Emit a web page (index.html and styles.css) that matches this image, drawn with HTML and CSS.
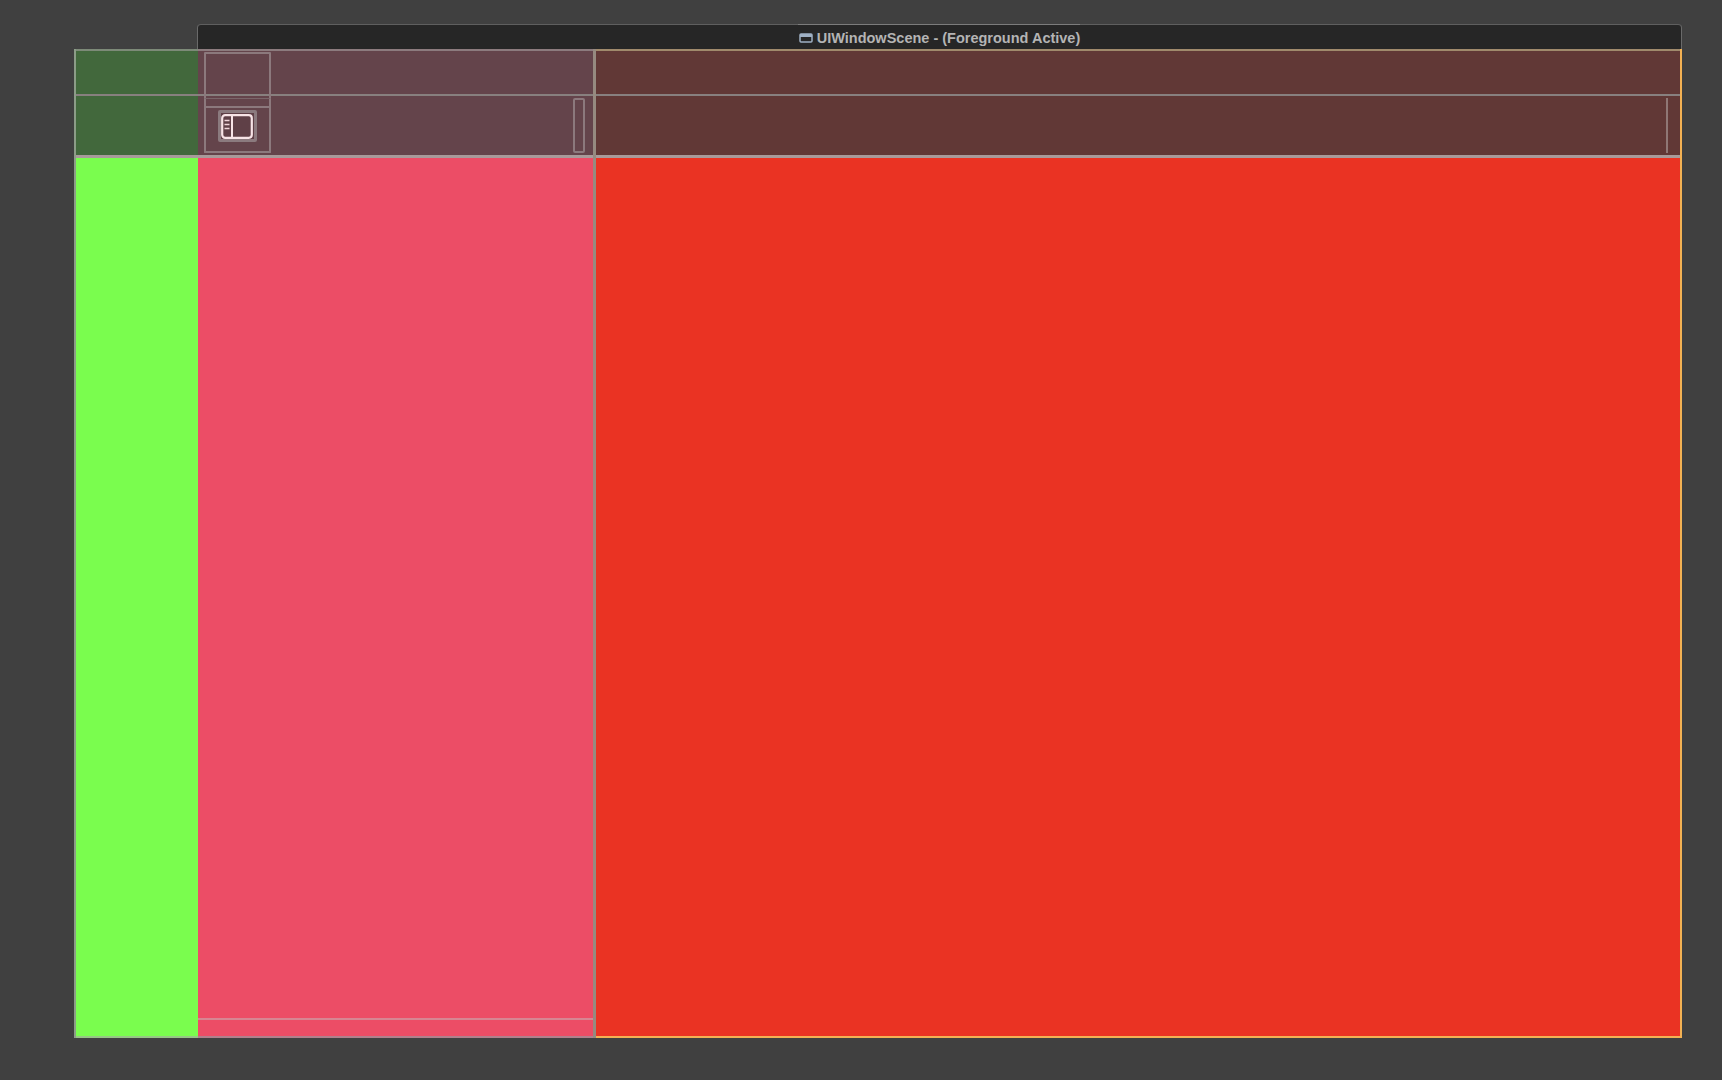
FILE: index.html
```html
<!DOCTYPE html>
<html lang="en">
<head>
    <meta charset="UTF-8">
    <title>UIWindowScene</title>
    <link rel="stylesheet" href="styles.css">
</head>
<body>
    <div class="scene-title">
        <svg class="scene-icon" width="14" height="10" viewBox="0 0 14 10">
            <rect x="1" y="1" width="12" height="8" rx="1" fill="none" stroke="#9fb0c4" stroke-width="1.5"/>
            <rect x="1" y="1" width="12" height="3" fill="#9fb0c4"/>
        </svg>
        <span>UIWindowScene - (Foreground Active)</span>
    </div>

    <div class="frame">
        <!-- Left column -->
        <div class="col col-green">
            <div class="bar">
                <div class="bar-top"></div>
                <div class="bar-bottom"></div>
            </div>
            <div class="col-body"></div>
        </div>

        <!-- Sidebar -->
        <div class="col col-pink">
            <div class="bar">
                <div class="bar-top"></div>
                <div class="bar-bottom"></div>
                <div class="nav-box"></div>
                <div class="nav-box-low"></div>
                <div class="toggle-box">
                    <svg width="33" height="25" viewBox="0 0 33 25">
                        <rect x="1.2" y="1.2" width="29.6" height="22.6" rx="3" fill="none" stroke="#f7e3e6" stroke-width="2.2"/>
                        <path d="M11 1v23" stroke="#f7e3e6" stroke-width="2"/>
                        <path d="M3.5 6.5h5M3.5 10.5h5M3.5 14.5h5" stroke="#f0d5da" stroke-width="1.7"/>
                    </svg>
                </div>
                <div class="side-handle"></div>
            </div>
            <div class="col-body">
                <div class="side-foot"></div>
            </div>
        </div>

        <!-- Content -->
        <div class="col col-red">
            <div class="bar">
                <div class="bar-top"></div>
                <div class="bar-bottom"></div>
                <div class="content-handle"></div>
            </div>
            <div class="col-body"></div>
        </div>
    </div>
</body>
</html>
```

FILE: styles.css
```css
/* Page */
body {
    margin: 0;
    height: 1080px;
    box-sizing: border-box;
    padding: 24px 40px 0 74px;
    background: #404040;
    font-family: "Liberation Sans", Arial, sans-serif;
    overflow: hidden;
}

/* Scene title */
.scene-title {
    position: relative;
    height: 25px;
    box-sizing: border-box;
    margin-left: 123px;
    display: flex;
    align-items: center;
    justify-content: center;
    gap: 4px;
    padding-top: 2px;
    background: #262626;
    border-top: 1px solid #5f5f5f;
    border-left: 1px solid #6a6a6a;
    border-right: 1px solid #6a6a6a;
    border-radius: 4px 4px 0 0;
    color: #b4b4b4;
    font-size: 14.5px;
    font-weight: bold;
}

/* Brighter stretch of the top edge above the label */
.scene-title::before {
    content: "";
    position: absolute;
    left: 600px;
    top: -1px;
    width: 282px;
    height: 1px;
    background: #7c7c7c;
}

/* Frame */
.frame {
    display: flex;
    height: 989px;
}

.col {
    display: flex;
    flex-direction: column;
}

.col-green {
    width: 124px;
    border-left: 2px solid #8c9c88;
    box-sizing: border-box;
}

.col-pink {
    width: 398px;
    box-sizing: border-box;
    border-right: 3px solid #968a80;
}

.col-red {
    flex: 1;
    border-right: 2px solid #f3b153;
}

/* Header bar */
.bar {
    position: relative;
    flex: none;
    box-sizing: border-box;
    height: 109px;
    border-bottom: 3px solid #a89a9a;
}

.bar-top {
    height: 43px;
    border-top: 2px solid #7d8a78;
    border-bottom: 2px solid #88807f;
}

.bar-bottom {
    height: 59px;
}

.col-green .bar {
    background: #42683c;
}

.col-pink .bar {
    background: #64444b;
}

.col-pink .bar-top {
    border-top-color: #8c7b7e;
}

.col-red .bar {
    background: #613836;
}

.col-red .bar-top {
    border-top-color: #a08a6c;
}

/* Column bodies */
.col-body {
    flex: 1;
    display: flex;
    flex-direction: column;
    justify-content: flex-end;
}

.col-green .col-body {
    background: #7afd4e;
    border-bottom: 2px solid #97c586;
}

.col-pink .col-body {
    background: #ec4d66;
    border-bottom: 2px solid #b0808c;
}

.col-red .col-body {
    background: #ea3323;
    border-bottom: 2px solid #f3b153;
}

.side-foot {
    height: 16px;
    border-top: 2px solid #d78592;
}

/* Overlaid view outlines */
.nav-box {
    position: absolute;
    left: 6px;
    top: 3px;
    width: 67px;
    height: 56px;
    box-sizing: border-box;
    border: 2px solid #8c797d;
    border-radius: 1px;
}

.nav-box-low {
    position: absolute;
    left: 6px;
    top: 49px;
    width: 67px;
    height: 55px;
    box-sizing: border-box;
    border: 2px solid #8c797d;
    border-top: 1px solid #7a666a;
    border-radius: 1px;
}

.toggle-box {
    position: absolute;
    left: 20px;
    top: 61px;
    width: 39px;
    height: 32px;
    box-sizing: border-box;
    border: 3px solid #8b7a7e;
    border-radius: 2px;
    background: #5f4047;
    display: flex;
    align-items: center;
    justify-content: center;
}

.side-handle {
    position: absolute;
    left: 375px;
    top: 49px;
    width: 12px;
    height: 55px;
    box-sizing: border-box;
    border: 2px solid #8c797d;
    border-radius: 2px;
}

.content-handle {
    position: absolute;
    right: 12px;
    top: 49px;
    width: 2px;
    height: 55px;
    background: #8f7775;
}
```
